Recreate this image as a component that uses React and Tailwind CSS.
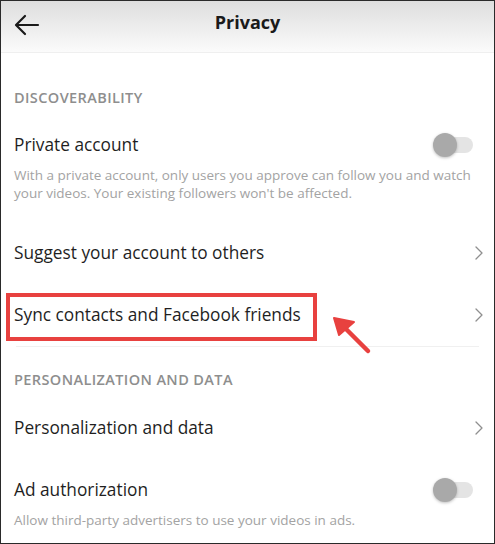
function Toggle() {
  return (
    <div className="relative w-[40px] h-[24px] flex items-center">
      <div className="absolute left-[6px] right-0 h-[16px] rounded-full bg-[#e4e4e4]" />
      <div className="absolute left-0 w-[24px] h-[24px] rounded-full bg-[#a9a9a9] shadow-[0_1px_3px_rgba(0,0,0,0.25)]" />
    </div>
  );
}

function Chevron() {
  return (
    <svg width="8" height="14" viewBox="0 0 8 14" fill="none" stroke="#8f8f8f" strokeWidth="1.3" strokeLinecap="round" strokeLinejoin="round">
      <path d="M1 1l6 6-6 6" />
    </svg>
  );
}

function SectionLabel({ children, className = "" }) {
  return (
    <div className={`px-[13px] text-[14.5px] leading-[22px] font-semibold tracking-[0.4px] text-[#8e8e8e] ${className}`}>
      {children}
    </div>
  );
}

function LinkRow({ title }) {
  return (
    <div className="h-[62px] flex items-center justify-between pl-[13px] pr-[11px]">
      <span className="text-[17.3px] text-[#1f1f1f]">{title}</span>
      <Chevron />
    </div>
  );
}

export default function App() {
  return (
    <div
      className="relative w-[495px] h-[544px] overflow-hidden border border-[#2a2a2a] bg-white"
      style={{ fontFamily: "'Open Sans', Lato, sans-serif" }}
    >
      {/* header */}
      <div className="h-[52px] flex items-center justify-center relative bg-gradient-to-b from-[#dedede] to-[#fbfbfb] border-b border-[#efefef]">
        <svg
          className="absolute left-[13px] top-[13px]"
          width="26"
          height="22"
          viewBox="0 0 26 22"
          fill="none"
          stroke="#1a1a1a"
          strokeWidth="2.2"
          strokeLinecap="round"
          strokeLinejoin="round"
        >
          <path d="M24 11H3M11 2L2 11l9 9" />
        </svg>
        <span className="text-[18px] font-bold text-[#1a1a1a] -mt-[8px]">Privacy</span>
      </div>

      <SectionLabel className="mt-[34px]">DISCOVERABILITY</SectionLabel>

      {/* private account */}
      <div className="mt-[25px] pl-[13px] pr-[21px]">
        <div className="flex items-center justify-between h-[22px]">
          <span className="text-[17.3px] text-[#1f1f1f]">Private account</span>
          <Toggle />
        </div>
        <p className="mt-[10px] text-[13.5px] leading-[18px] text-[#a3a3a3]">
          With a private account, only users you approve can follow you and watch your videos. Your existing followers won't be affected.
        </p>
      </div>

      <div className="mt-[20px]">
        <LinkRow title="Suggest your account to others" />
        <LinkRow title="Sync contacts and Facebook friends" />
      </div>
      <div className="mx-[15px] h-px bg-[#f0f0f0]" />

      <SectionLabel className="mt-[22px]">PERSONALIZATION AND DATA</SectionLabel>

      <div className="mt-[6px]">
        <LinkRow title="Personalization and data" />
      </div>

      <div className="mt-[20px] pl-[13px] pr-[21px]">
        <div className="flex items-center justify-between h-[22px]">
          <span className="text-[17.3px] text-[#1f1f1f]">Ad authorization</span>
          <Toggle />
        </div>
        <p className="mt-[10px] text-[13.5px] leading-[18px] text-[#a3a3a3]">
          Allow third-party advertisers to use your videos in ads.
        </p>
      </div>

      {/* annotation */}
      <div className="absolute left-[5px] top-[292px] w-[311px] h-[48px] border-[4px] border-[#e8413f]" />
      <svg className="absolute left-[325px] top-[310px]" width="50" height="48" viewBox="0 0 50 48">
        <path d="M42 40L16 14" stroke="#e8413f" strokeWidth="4.5" strokeLinecap="round" />
        <path d="M8 7L28 11L13 24Z" fill="#e8413f" stroke="#e8413f" strokeWidth="2" strokeLinejoin="round" />
      </svg>
    </div>
  );
}
